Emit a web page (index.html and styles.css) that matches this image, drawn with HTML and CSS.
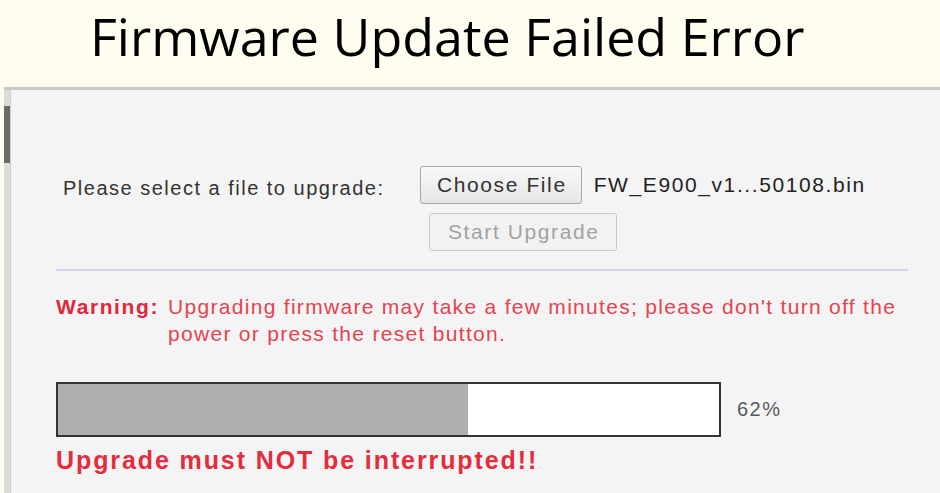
FILE: index.html
```html
<!DOCTYPE html>
<html lang="en">
<head>
    <meta charset="UTF-8">
    <title>Firmware Update Failed Error</title>
    <link rel="stylesheet" href="styles.css">
</head>
<body>
    <header class="title-bar">
        <h1>Firmware Update Failed Error</h1>
    </header>
    <div class="frame">
        <div class="scroll-track"><div class="scroll-thumb"></div></div>
        <main class="panel">
            <div class="upload-row">
                <span class="upload-label">Please select a file to upgrade:</span>
                <div class="upload-controls">
                    <div class="file-line">
                        <button class="btn">Choose File</button>
                        <span class="file-name">FW_E900_v1...50108.bin</span>
                    </div>
                    <button class="btn btn-disabled" disabled>Start Upgrade</button>
                </div>
            </div>
            <hr class="divider">
            <div class="warning">
                <strong>Warning:</strong>
                <p>Upgrading firmware may take a few minutes; please don't turn off the power or press the reset button.</p>
            </div>
            <div class="progress-row">
                <div class="progress"><div class="progress-fill" style="width: 62%"></div></div>
                <span class="progress-value">62%</span>
            </div>
            <p class="notice">Upgrade must NOT be interrupted!!</p>
        </main>
    </div>
</body>
</html>
```

FILE: styles.css
```css
body {
    margin: 0;
    background: #fefdf0;
    font-family: "Liberation Sans", Arial, sans-serif;
    overflow: hidden;
}
.title-bar {
    height: 87px;
    padding-left: 90px;
}
.title-bar h1 {
    margin: 0;
    font-family: "Open Sans", sans-serif;
    font-weight: 400;
    font-size: 52px;
    line-height: normal;
    color: #000;
}
.frame {
    display: flex;
    height: 406px;
    margin-left: 4px;
    border-top: 3px solid #c9c9c9;
    background: #f4f4f4;
}
.scroll-track {
    width: 6px;
    background: #dcdcdc;
    padding-top: 16px;
}
.scroll-thumb {
    height: 57px;
    background: #6a6a6a;
}
.panel {
    flex: 1;
    border-left: 1px solid #cfcfcf;
    padding: 76px 32px 0 45px;
}
.upload-row {
    display: flex;
    align-items: flex-start;
}
.upload-label {
    width: 357px;
    padding-left: 7px;
    margin-top: 11px;
    font-size: 20px;
    letter-spacing: 1.5px;
    color: #333;
}
.upload-controls {
    display: flex;
    flex-direction: column;
    align-items: flex-start;
    gap: 9px;
}
.file-line {
    display: flex;
    align-items: center;
    gap: 12px;
}
.file-name {
    font-size: 21px;
    letter-spacing: 1.6px;
    color: #222;
}
.btn {
    height: 38px;
    padding: 0 14px 0 16px;
    font-family: inherit;
    font-size: 21px;
    letter-spacing: 1.6px;
    color: #333;
    background: linear-gradient(#f8f8f8, #e6e6e6);
    border: 1px solid #a9a9a9;
    border-radius: 3px;
}
.btn-disabled {
    margin-left: 9px;
    padding: 0 16px 0 18px;
    color: #a2a2a2;
    background: #f2f2f2;
    border-color: #cacaca;
}
.divider {
    margin: 18px 0 0;
    border: 0;
    border-top: 2px solid #d4d4ec;
}
.warning {
    display: flex;
    gap: 9px;
    margin-top: 22px;
    font-size: 21px;
    letter-spacing: 1.3px;
    line-height: 27px;
    color: #e4434f;
}
.warning strong {
    letter-spacing: 1.6px;
    color: #e3263a;
}
.warning p {
    margin: 0;
    max-width: 740px;
}
.progress-row {
    display: flex;
    align-items: center;
    gap: 16px;
    margin-top: 35px;
}
.progress {
    width: 661px;
    height: 51px;
    border: 2px solid #333;
    background: #fff;
}
.progress-fill {
    height: 100%;
    background: #afafaf;
}
.progress-value {
    font-size: 20px;
    letter-spacing: 1.5px;
    color: #5a5a5a;
}
.notice {
    margin: 9px 0 0;
    font-size: 25px;
    font-weight: bold;
    letter-spacing: 1.9px;
    color: #e52c3c;
}
```
